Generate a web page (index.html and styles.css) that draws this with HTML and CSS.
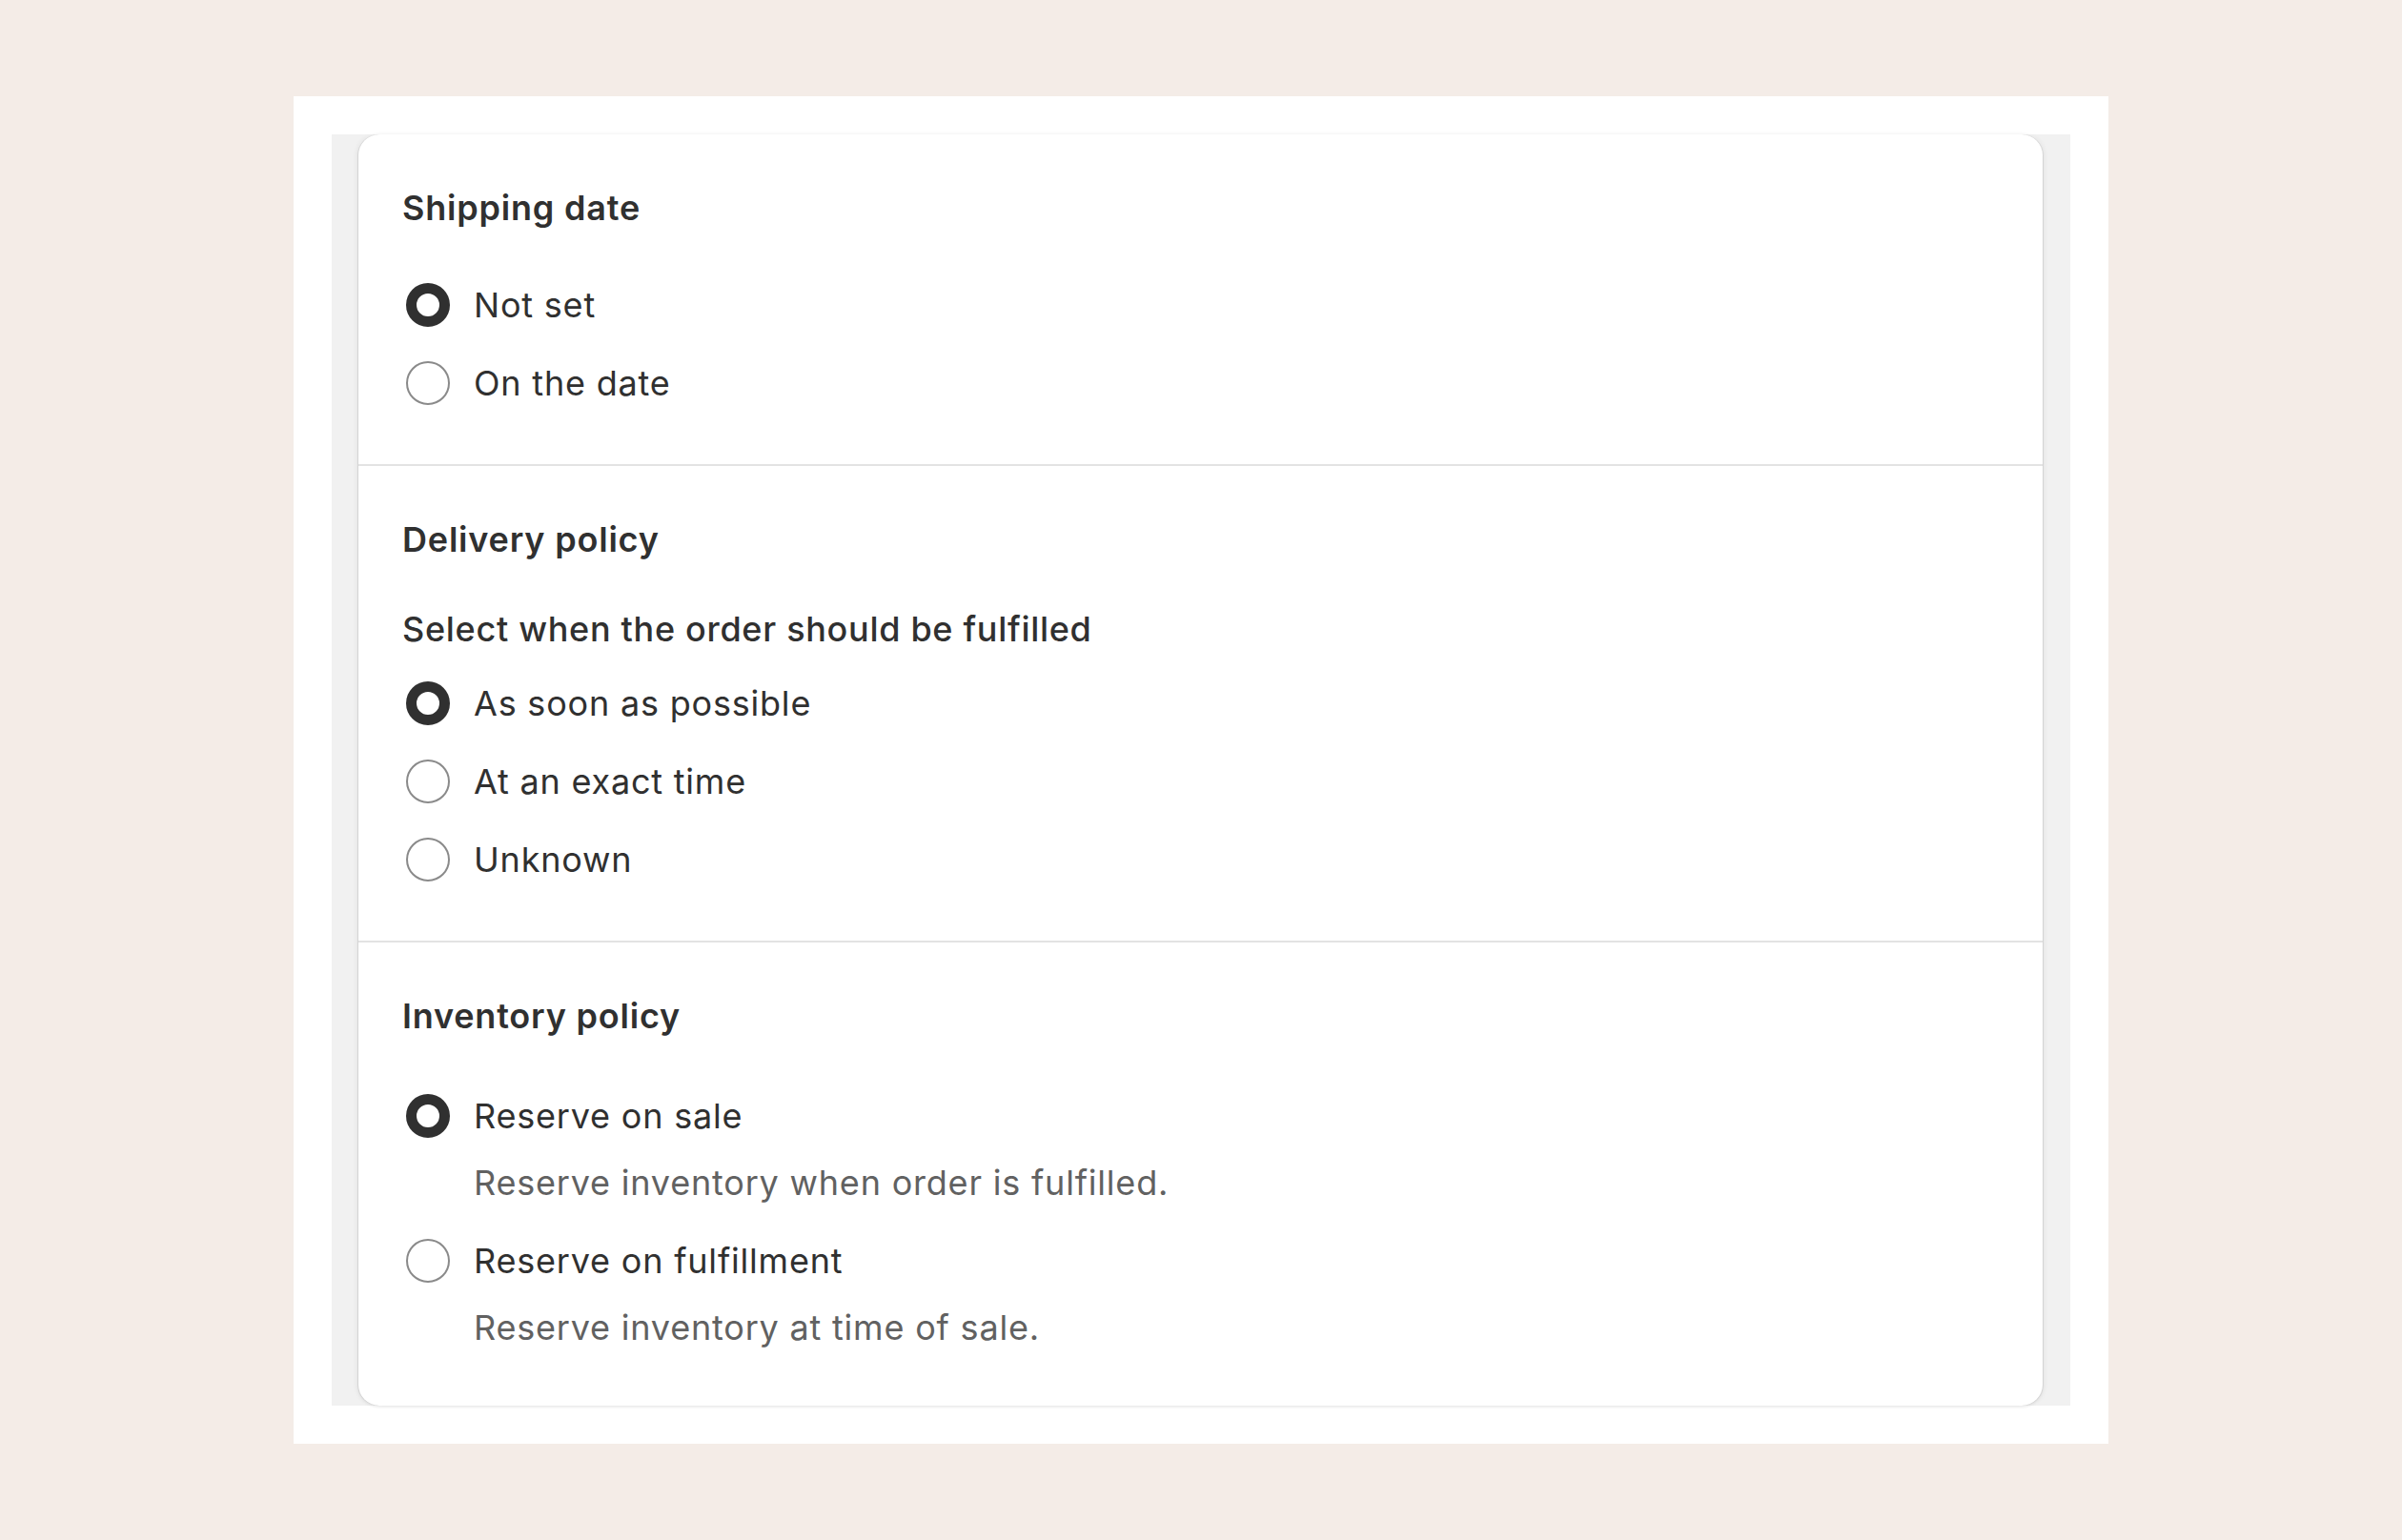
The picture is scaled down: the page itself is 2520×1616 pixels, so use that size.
FILE: index.html
```html
<!DOCTYPE html>
<html lang="en">
<head>
  <meta charset="UTF-8">
  <meta name="viewport" content="width=device-width, initial-scale=1.0">
  <title>Order settings</title>
  <link rel="stylesheet" href="styles.css">
</head>
<body>
  <div class="frame">
    <div class="well">
      <div class="card">

        <section class="section">
          <h2 class="heading">Shipping date</h2>
          <ul class="choices">
            <li class="choice">
              <span class="radio checked"></span>
              <span class="label">Not set</span>
            </li>
            <li class="choice">
              <span class="radio"></span>
              <span class="label">On the date</span>
            </li>
          </ul>
        </section>

        <section class="section">
          <h2 class="heading">Delivery policy</h2>
          <p class="subtitle">Select when the order should be fulfilled</p>
          <ul class="choices tight">
            <li class="choice">
              <span class="radio checked"></span>
              <span class="label">As soon as possible</span>
            </li>
            <li class="choice">
              <span class="radio"></span>
              <span class="label">At an exact time</span>
            </li>
            <li class="choice">
              <span class="radio"></span>
              <span class="label">Unknown</span>
            </li>
          </ul>
        </section>

        <section class="section last">
          <h2 class="heading">Inventory policy</h2>
          <ul class="choices wide">
            <li class="item">
              <div class="choice">
                <span class="radio checked"></span>
                <span class="label">Reserve on sale</span>
              </div>
              <p class="help">Reserve inventory when order is fulfilled.</p>
            </li>
            <li class="item">
              <div class="choice">
                <span class="radio"></span>
                <span class="label">Reserve on fulfillment</span>
              </div>
              <p class="help">Reserve inventory at time of sale.</p>
            </li>
          </ul>
        </section>

      </div>
    </div>
  </div>
</body>
</html>
```

FILE: styles.css
```css
html, body {
  margin: 0;
  padding: 0;
  height: 100%;
}
body {
  background: #f4ece7;
  font-family: Inter, "Noto Sans", sans-serif;
  color: #303030;
  display: flex;
  align-items: center;
  justify-content: center;
}
.frame {
  width: 1904px;
  box-sizing: border-box;
  background: #fff;
  padding: 40px;
}
.well {
  background: #f1f1f1;
  padding: 0 29px 0 28px;
}
.card {
  background: #fff;
  border-radius: 22px;
  box-shadow: -1px 0 0 rgba(0, 0, 0, 0.07), 1px 0 0 rgba(0, 0, 0, 0.07),
    -3px 0 4px rgba(0, 0, 0, 0.04), 3px 0 4px rgba(0, 0, 0, 0.04),
    0 2px 3px rgba(0, 0, 0, 0.05);
}
.section {
  padding: 51px 46px 49px;
  border-bottom: 2px solid #e3e3e3;
}
.section.last {
  border-bottom: none;
  padding-bottom: 56px;
}
.heading {
  margin: 0;
  font-size: 36px;
  line-height: 52px;
  font-weight: 600;
  letter-spacing: 0.8px;
}
.subtitle {
  margin: 42px 0 0;
  font-size: 36px;
  line-height: 52px;
  font-weight: 450;
  letter-spacing: 0.7px;
}
.choices {
  list-style: none;
  margin: 40px 0 0;
  padding: 0;
  display: flex;
  flex-direction: column;
  gap: 10px;
}
.choices.tight {
  margin-top: 16px;
}
.choices.wide {
  margin-top: 43px;
  gap: 20px;
}
.choice {
  display: flex;
  align-items: center;
  height: 72px;
}
.radio {
  width: 46px;
  height: 46px;
  margin: 0 25px 0 4px;
  box-sizing: border-box;
  border-radius: 50%;
  border: 2.5px solid #8a8a8a;
  background: #fff;
  flex-shrink: 0;
}
.radio.checked {
  border: 11px solid #303030;
}
.label {
  font-size: 36px;
  line-height: 52px;
  font-weight: 400;
  letter-spacing: 0.8px;
}
.help {
  margin: 8px 0 0 75px;
  font-size: 36px;
  line-height: 52px;
  letter-spacing: 0.8px;
  color: #616161;
}
```
